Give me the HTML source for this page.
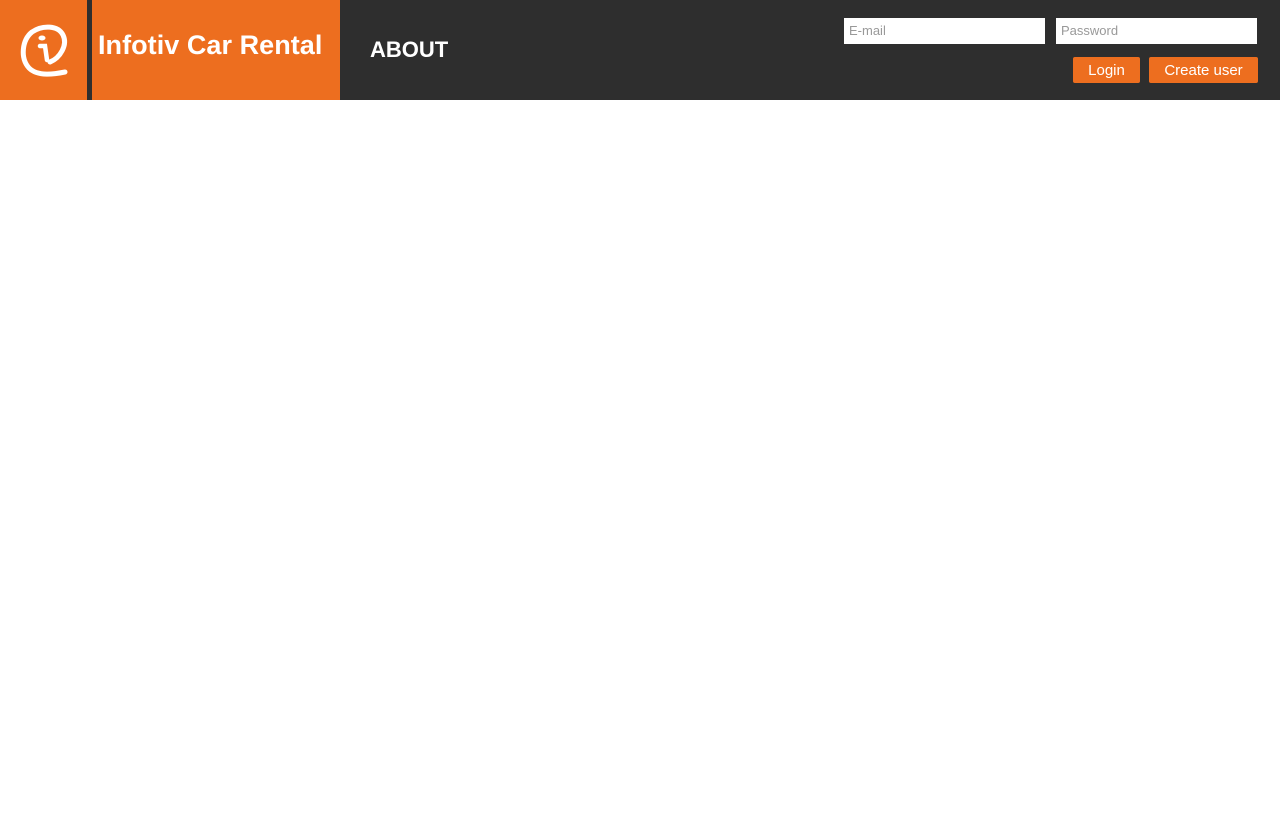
<!DOCTYPE html>
<html><head><style>
body{margin:0;background:#fff;font-family:"Liberation Sans",sans-serif;width:1280px;height:813px;overflow:hidden}
.hdr{position:absolute;left:0;top:0;width:1280px;height:100px;background:#2e2e2e}
.logo{position:absolute;left:0;top:0;width:87px;height:100px;background:#ed6e1f}
.title{position:absolute;left:92px;top:0;width:248px;height:100px;background:#ed6e1f;color:#fff;font-weight:bold;font-size:27px}
.title span{position:absolute;left:6px;top:30px;letter-spacing:0.05px}
.about{position:absolute;left:370px;top:37px;color:#fff;font-weight:bold;font-size:22px}
.in{position:absolute;top:18px;width:201px;height:26px;background:#fff;box-sizing:border-box;color:#999;font-size:13px;padding:5px 5px}
.btn{position:absolute;top:57px;height:26px;background:#ed6e1f;color:#fff;font-size:15px;border-radius:2px;text-align:center;line-height:27px}
</style></head><body>
<div class="hdr">
<div class="logo"><svg width="87" height="100" viewBox="0 0 87 100">
<path d="M65 72 C55 74 38 77 29 68 C20 58 22 40 32 32 C42 25 58 25 63 35 C68 45 60 58 50 62" fill="none" stroke="#fff" stroke-width="5" stroke-linecap="round"/>
<path d="M40 46 L45 46 L47 60" fill="none" stroke="#fff" stroke-width="4.5" stroke-linecap="round"/>
<ellipse cx="42" cy="38" rx="3.5" ry="2.5" fill="#fff"/>
</svg></div>
<div class="title"><span>Infotiv Car Rental</span></div>
<div class="about">ABOUT</div>
<div class="in" style="left:844px">E-mail</div>
<div class="in" style="left:1056px">Password</div>
<div class="btn" style="left:1073px;width:67px">Login</div>
<div class="btn" style="left:1149px;width:109px">Create user</div>
</div>
</body></html>
